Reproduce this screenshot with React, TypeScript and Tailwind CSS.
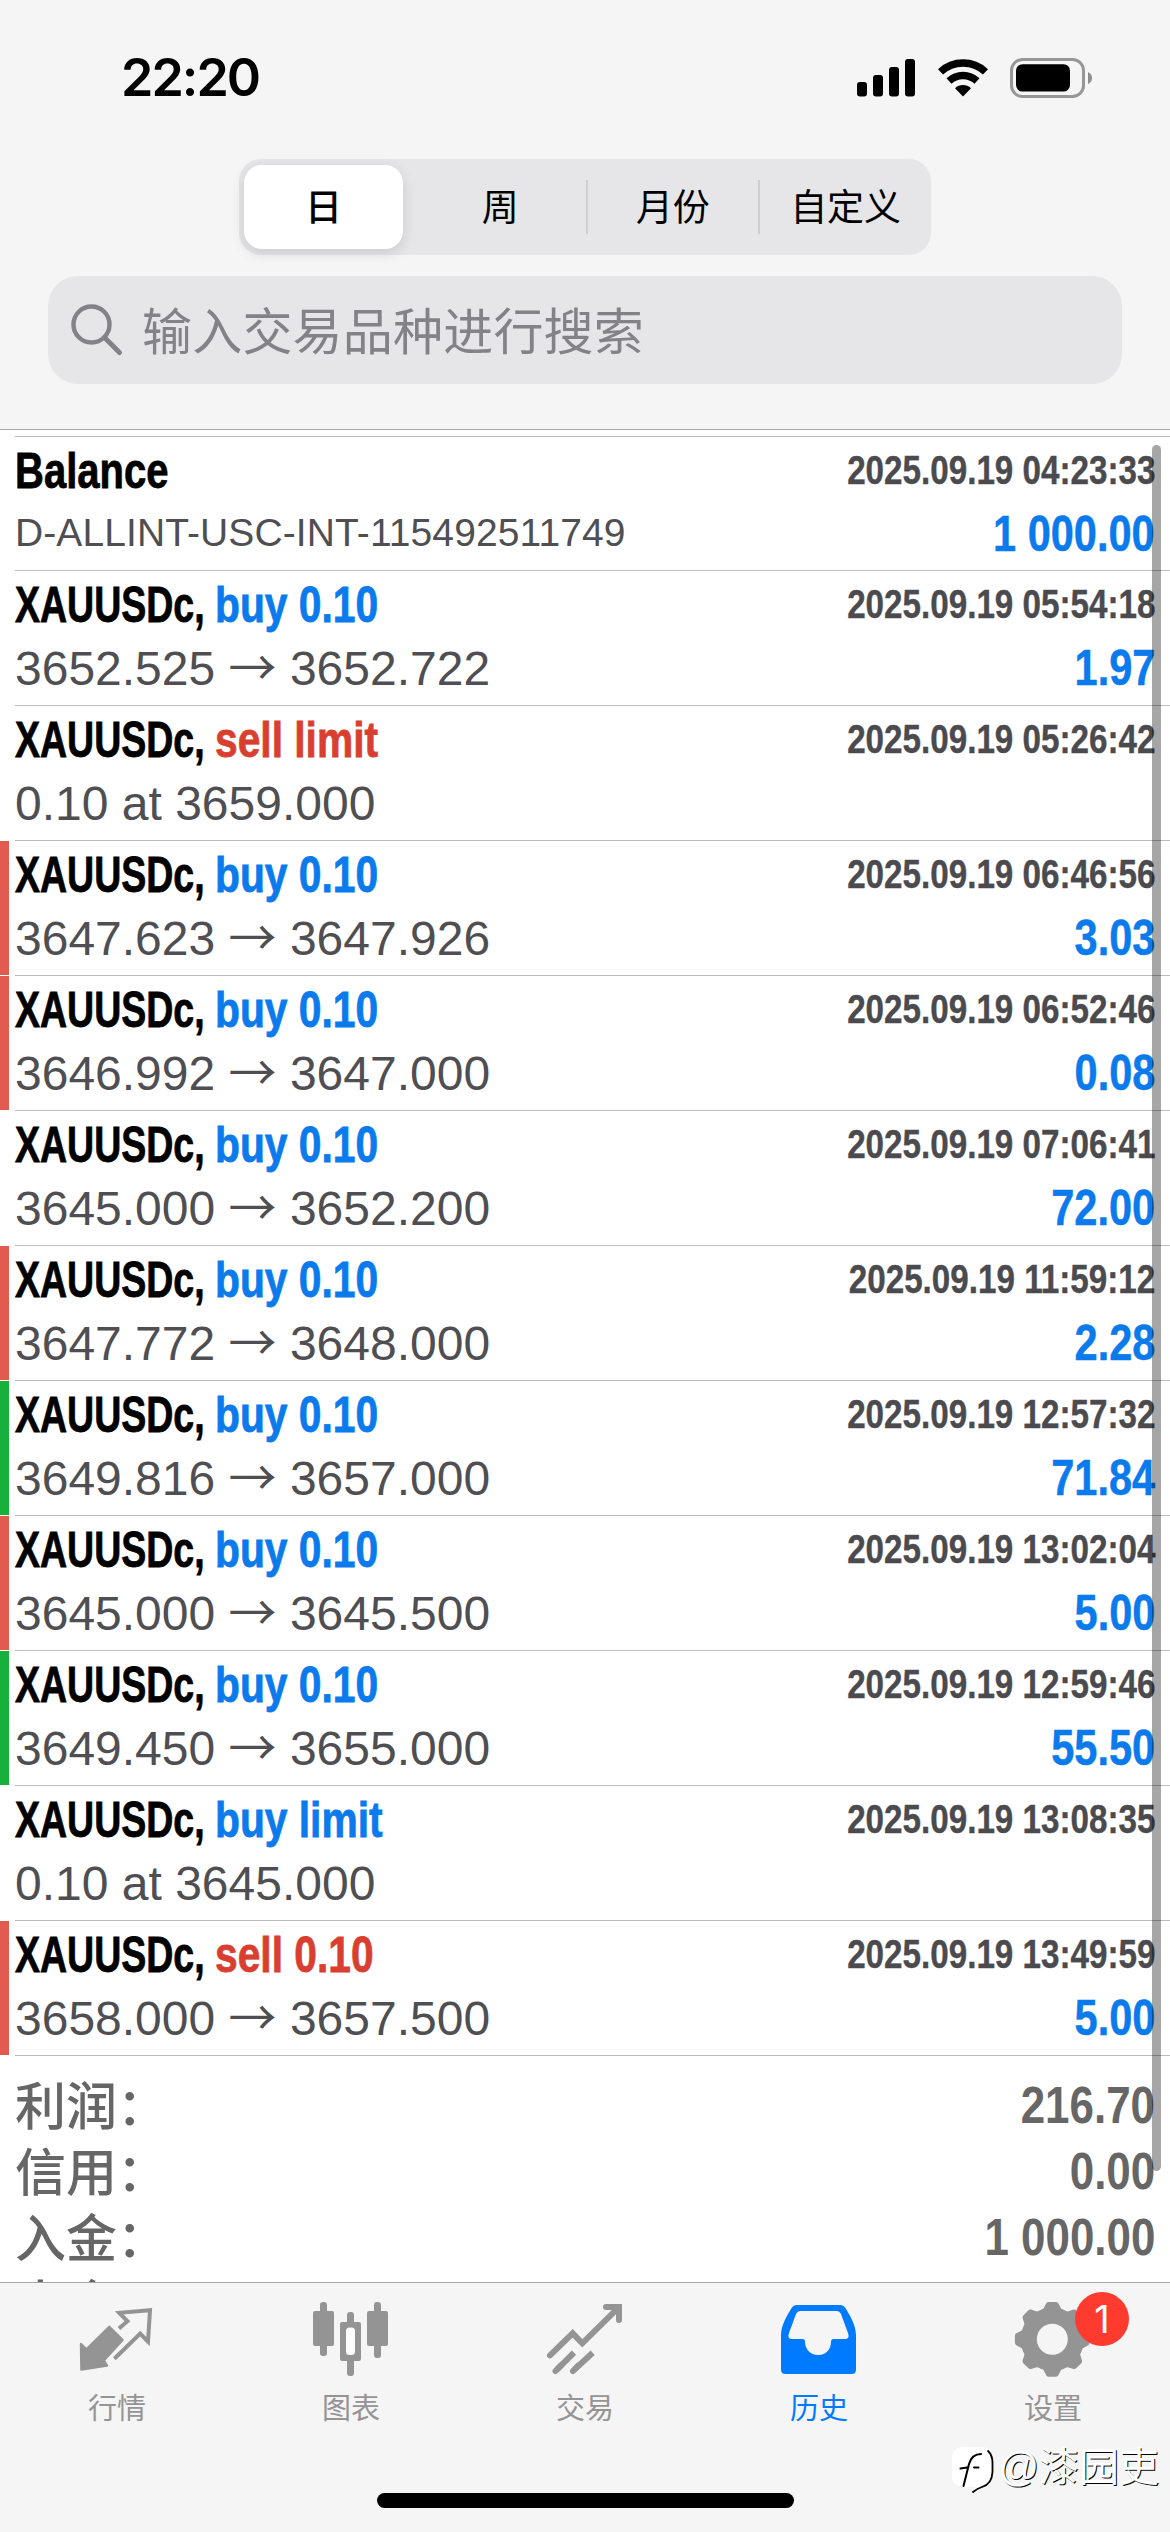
import clsx from 'clsx'
import { Fragment, ReactNode } from 'react'

type Deal = {
    action: string
    time: string
    open: string
    close?: string
    profit?: string
    mark?: 'sl' | 'tp'
}

const deals: Deal[] = [
    { action: 'buy 0.10', time: '2025.09.19 05:54:18', open: '3652.525', close: '3652.722', profit: '1.97' },
    { action: 'sell limit', time: '2025.09.19 05:26:42', open: '0.10 at 3659.000' },
    { action: 'buy 0.10', time: '2025.09.19 06:46:56', open: '3647.623', close: '3647.926', profit: '3.03', mark: 'sl' },
    { action: 'buy 0.10', time: '2025.09.19 06:52:46', open: '3646.992', close: '3647.000', profit: '0.08', mark: 'sl' },
    { action: 'buy 0.10', time: '2025.09.19 07:06:41', open: '3645.000', close: '3652.200', profit: '72.00' },
    { action: 'buy 0.10', time: '2025.09.19 11:59:12', open: '3647.772', close: '3648.000', profit: '2.28', mark: 'sl' },
    { action: 'buy 0.10', time: '2025.09.19 12:57:32', open: '3649.816', close: '3657.000', profit: '71.84', mark: 'tp' },
    { action: 'buy 0.10', time: '2025.09.19 13:02:04', open: '3645.000', close: '3645.500', profit: '5.00', mark: 'sl' },
    { action: 'buy 0.10', time: '2025.09.19 12:59:46', open: '3649.450', close: '3655.000', profit: '55.50', mark: 'tp' },
    { action: 'buy limit', time: '2025.09.19 13:08:35', open: '0.10 at 3645.000' },
    { action: 'sell 0.10', time: '2025.09.19 13:49:59', open: '3658.000', close: '3657.500', profit: '5.00', mark: 'sl' },
]

const summary = [
    { label: '利润', value: '216.70' },
    { label: '信用', value: '0.00' },
    { label: '入金', value: '1 000.00' },
    { label: '出金', value: '' },
]

function StatusBar() {
    return (
        <div className="flex h-[156px] items-center justify-between pl-[121px] pr-[78px]">
            <span className="font-['Inter',sans-serif] text-[52px] font-semibold leading-none tracking-[-2px]">22:20</span>
            <div className="flex items-center">
                <svg className="mr-[23px] h-[38px] w-[58px]" viewBox="0 0 58 38">
                    <rect x="0" y="23" width="10" height="14.5" rx="3" />
                    <rect x="16" y="16" width="10" height="21.5" rx="3" />
                    <rect x="32" y="8" width="10" height="29.5" rx="3" />
                    <rect x="48" y="0" width="10" height="37.5" rx="3" />
                </svg>
                <svg className="mr-[22px] h-[38px] w-[50px]" viewBox="0 0 50 38">
                    <path d="M2.5 12.9A33 33 0 0 1 47.5 12.9M11 22A20.5 20.5 0 0 1 39 22" fill="none" stroke="#000" strokeWidth="7.4" />
                    <path d="M25 37.4L17 29.2A11.5 11.5 0 0 1 33 29.2Z" />
                </svg>
                <svg className="h-[40px] w-[82px]" viewBox="0 0 82 40">
                    <rect x="1.5" y="1.5" width="72" height="37" rx="11" fill="none" stroke="#969696" strokeWidth="3" />
                    <rect x="6" y="6.2" width="54" height="27.4" rx="6.5" />
                    <path d="M78 14Q82 16 82 20T78 26Z" fill="#8e8e8e" />
                </svg>
            </div>
        </div>
    )
}

function Segments() {
    return (
        <div className="mx-auto mt-[3px] flex h-24 w-[692px] items-center rounded-[22px] bg-[#e6e6e8] text-[37px]">
            <div className="flex flex-1 pl-[5px]">
                <span className="flex h-[84px] w-[159px] items-center justify-center rounded-[18px] bg-white pt-[4px] font-medium shadow-[0_4px_14px_rgba(0,0,0,0.12)]">日</span>
            </div>
            <span className="flex-1 pt-[4px] text-center">周</span>
            <span className="h-[54px] w-[2px] bg-[#cfcfd2]" />
            <span className="flex-1 pt-[4px] text-center">月份</span>
            <span className="h-[54px] w-[2px] bg-[#cfcfd2]" />
            <span className="flex-1 pt-[4px] text-center">自定义</span>
        </div>
    )
}

function SearchBox() {
    return (
        <div className="mx-12 mt-[21px] flex h-[108px] items-center rounded-[30px] bg-[#e6e6e8] pl-[22px] text-[#838387]">
            <svg className="mr-[18px] h-[54px] w-[54px]" viewBox="0 0 54 54" fill="none" stroke="currentColor" strokeWidth="4.4">
                <circle cx="21.5" cy="21.5" r="18" />
                <path d="M34.5 34.5L49.5 49.5" strokeLinecap="round" strokeWidth="5" />
            </svg>
            <span className="pt-[6px] text-[50px] leading-none tracking-[0.2px]">输入交易品种进行搜索</span>
        </div>
    )
}

type RowProps = {
    title: ReactNode
    time: string
    details: ReactNode
    profit?: string
    mark?: 'sl' | 'tp'
    className?: string
}

function Row({ title, time, details, profit, mark, className }: RowProps) {
    return (
        <div className={clsx('flex gap-[6px]', className)}>
            <div className={clsx('mb-px w-[9px]', mark === 'sl' && 'bg-[#e15c4f]', mark === 'tp' && 'bg-[#16b13c]')} />
            <div className="flex-1 border-b border-[#bcbcbe] pr-[15px] pt-px leading-[64px]">
                <div className="flex h-[64px] justify-between">
                    <div className="flex text-[50px] font-bold leading-[66px] [-webkit-text-stroke:0.8px]">{title}</div>
                    <span className="origin-right scale-x-[0.83] whitespace-nowrap text-[40px] font-bold text-[#4b4b4f] [-webkit-text-stroke:0.4px]">{time}</span>
                </div>
                <div className="flex h-[64px] justify-between">
                    <div className="whitespace-pre text-[48px] leading-[66px] text-[#4f4f53]">{details}</div>
                    <span className="origin-right scale-x-[0.83] whitespace-nowrap text-[50px] font-bold text-[#0a7aec] [-webkit-text-stroke:0.5px]">{profit}</span>
                </div>
            </div>
        </div>
    )
}

function DealRow({ deal }: { deal: Deal }) {
    return (
        <Row
            className="h-[135px]"
            mark={deal.mark}
            time={deal.time}
            profit={deal.profit}
            title={
                <Fragment>
                    <span className="w-[200px] origin-left scale-x-[0.75]">XAUUSDc,</span>
                    <span
                        className={clsx(
                            'origin-left scale-x-[0.815] whitespace-nowrap',
                            deal.action.startsWith('sell') ? 'text-[#d93f31]' : 'text-[#0a7aec]'
                        )}
                    >
                        {deal.action}
                    </span>
                </Fragment>
            }
            details={
                <Fragment>
                    {deal.open}
                    {deal.close && (
                        <Fragment>
                            {' '}
                            <span className="font-['Noto_Sans_CJK_SC',sans-serif] leading-none">→</span> {deal.close}
                        </Fragment>
                    )}
                </Fragment>
            }
        />
    )
}

function QuotesIcon() {
    return (
        <svg className="size-20" viewBox="0 0 80 80">
            <path
                d="M32.3 28.8L45.6 42L26.8 62.4L30 67.6L4.4 71.6L4 46L9.4 51.4Z"
                fill="currentColor"
                stroke="currentColor"
                strokeWidth="2.4"
                strokeLinejoin="round"
            />
            <path
                d="M42 30.6L50.4 23.2L42.2 14.8L73 12.2L71 43.6L63.2 35.6L37.4 60.8"
                fill="none"
                stroke="currentColor"
                strokeWidth="4"
            />
        </svg>
    )
}

function ChartIcon() {
    return (
        <svg className="size-20" viewBox="0 0 80 80" fill="currentColor">
            <rect x="9" y="4" width="7" height="54" rx="3" />
            <rect x="2" y="13" width="21" height="35" rx="2" />
            <rect x="36" y="14" width="7" height="64" rx="3" />
            <rect x="29" y="24" width="21" height="39" rx="2" />
            <rect x="35" y="29.5" width="9" height="27.5" rx="3.5" fill="#fcfcfc" />
            <rect x="63" y="4" width="7" height="56" rx="3" />
            <rect x="56" y="13" width="21" height="35" rx="2" />
        </svg>
    )
}

function TradeIcon() {
    return (
        <svg className="size-20" viewBox="0 0 80 80" fill="none" stroke="currentColor" strokeWidth="6" strokeLinecap="round">
            <path d="M5 57.3L27.7 35.3L37.3 45.3L73.7 9.3M61 9H74V22" strokeLinejoin="miter" />
            <path d="M10.5 73L16 67.4M28 73L33.5 67.4" />
            <path d="M12 71.5L29 54.7M29.5 71.5L47.7 54.7" strokeLinecap="butt" />
        </svg>
    )
}

function HistoryIcon() {
    return (
        <svg className="size-20" viewBox="0 0 80 80">
            <path
                fill="currentColor"
                fillRule="evenodd"
                d="M18 7H61Q64.5 7 66.4 10C71 17.5 77 27.5 77 37V71.5Q77 76 72.5 76H6.5Q2 76 2 71.5V37C2 27.5 8 17.5 12.6 10Q14.5 7 18 7Z
                   M21.5 13Q18.5 13 17 16L10 35Q8 41 13 41H24Q26 41 26 43.5C26 51 31 57 39.3 57S52 51 52 43.5Q52 41 54 41H66Q71 41 69 35L62 16Q60.5 13 57.5 13Z"
            />
        </svg>
    )
}

function SettingsIcon() {
    return (
        <svg className="size-20" viewBox="0 0 80 80" stroke="currentColor" strokeLinejoin="round">
            <circle cx="39.3" cy="41.3" r="23" fill="none" strokeWidth="15" />
            {[0, 45, 90, 135, 180, 225, 270, 315].map((angle) => (
                <path
                    key={angle}
                    d="M28 13.5L31.5 12L34.6 6Q35 5.4 36 5.4H42.6Q43.6 5.4 44 6L47.1 12L50.6 13.5Z"
                    fill="currentColor"
                    strokeWidth="3"
                    transform={`rotate(${angle} 39.3 41.3)`}
                />
            ))}
        </svg>
    )
}

const tabs = [
    { label: '行情', icon: <QuotesIcon /> },
    { label: '图表', icon: <ChartIcon /> },
    { label: '交易', icon: <TradeIcon /> },
    { label: '历史', icon: <HistoryIcon />, active: true },
    { label: '设置', icon: <SettingsIcon />, badge: 1 },
]

function TabBar() {
    return (
        <div className="relative flex h-[250px] flex-col justify-between border-t border-[#a8a8a8] bg-[#f5f5f5] pb-6">
            <div className="grid grid-cols-5">
                {tabs.map((tab) => (
                    <div
                        key={tab.label}
                        className={clsx('relative flex flex-col items-center pt-[15px]', tab.active ? 'text-[#007aff]' : 'text-[#949494]')}
                    >
                        {tab.icon}
                        <span className="mt-[11px] text-[29px] leading-[40px]">{tab.label}</span>
                        {tab.badge && (
                            <span className="absolute left-[139px] top-[9px] flex size-[54px] items-center justify-center rounded-full bg-[#ff3b30] font-['Inter',sans-serif] text-[38px] leading-none text-white">
                                {tab.badge}
                            </span>
                        )}
                    </div>
                ))}
            </div>
            <div className="mx-auto h-[15px] w-[417px] rounded-full bg-black" />
            <Watermark />
        </div>
    )
}

function Watermark() {
    return (
        <div className="absolute right-[11px] top-[157px] flex items-center text-white">
            <svg className="h-[60px] w-[50px]" viewBox="0 0 50 60" fill="none" stroke="#000" strokeLinecap="round">
                <path d="M16 7H33Q44 7 44 19V33Q44 46 32 47L25 52L27 47H16Q4 47 4 35V19Q4 7 16 7Z" fill="#fff" stroke="none" />
                <path d="M15.5 46L21 24Q24 14 33 14M12.5 28.5L19 27.5M26 27.5H30.5" strokeWidth="2" />
                <path d="M40 11Q44.5 15 44.5 23V32Q44 44 34 47Q29 48.5 25 52" strokeWidth="1.8" />
            </svg>
            <span className="-mt-[6px] whitespace-nowrap text-[40px] leading-[60px] [text-shadow:1px_1px_0_#000]">@漆园吏</span>
        </div>
    )
}

export default function App() {
    return (
        <div className="flex h-[2532px] w-[1170px] flex-col overflow-hidden bg-white font-['Liberation_Sans','Noto_Sans_CJK_SC',sans-serif] text-black">
            <div className="h-[430px] border-b border-[#a8a8a8] bg-[#f5f5f5]">
                <StatusBar />
                <Segments />
                <SearchBox />
            </div>

            <div className="relative h-[1852px] overflow-hidden">
                <div className="ml-[15px] mt-[6px] h-px bg-[#bcbcbe]" />
                <Row
                    className="h-[134px]"
                    title={<span className="origin-left scale-x-[0.8]">Balance</span>}
                    time="2025.09.19 04:23:33"
                    details={<span className="block text-[39px] leading-[62px] tracking-[0.1px]">D-ALLINT-USC-INT-115492511749</span>}
                    profit="1 000.00"
                />
                {deals.map((deal) => (
                    <DealRow key={deal.time} deal={deal} />
                ))}
                <div className="px-[15px] pt-[16px] font-medium leading-[66px] text-[#666666]">
                    {summary.map((item) => (
                        <div key={item.label} className="flex h-[66px] justify-between">
                            <span className="pt-[3px] text-[51px]">{item.label}：</span>
                            <span className="origin-right scale-x-[0.845] text-[52px] font-bold">{item.value}</span>
                        </div>
                    ))}
                </div>
                <div className="absolute right-[9px] top-[15px] h-[1726px] w-[9px] rounded-full bg-black/35" />
            </div>

            <TabBar />
        </div>
    )
}
